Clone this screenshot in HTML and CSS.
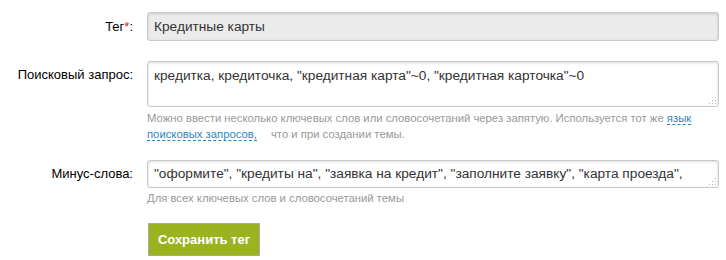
FILE: index.html
```html
<!DOCTYPE html>
<html lang="ru">
<head>
  <meta charset="UTF-8">
  <title>Тег</title>
  <link rel="stylesheet" href="styles.css">
</head>
<body>
  <form class="tag-form">
    <div class="row">
      <label class="label" for="tagName">Тег<span class="req">*</span>:</label>
      <div class="field">
        <input class="input input-readonly" id="tagName" type="text" value="Кредитные карты" readonly>
      </div>
    </div>

    <div class="row row-query">
      <label class="label" for="query">Поисковый запрос:</label>
      <div class="field">
        <div class="area-wrap">
          <textarea class="input area" id="query">кредитка, кредиточка, "кредитная карта"~0, "кредитная карточка"~0</textarea>
          <span class="grip"></span>
        </div>
        <div class="hint">Можно ввести несколько ключевых слов или словосочетаний через запятую. Используется тот же <a class="link" href="#">язык</a><br><a class="link" href="#">поисковых запросов,</a><span class="hint-tail">что и при создании темы.</span></div>
      </div>
    </div>

    <div class="row row-minus">
      <label class="label" for="minus">Минус-слова:</label>
      <div class="field">
        <div class="area-wrap">
          <textarea class="input area area-line" id="minus">"оформите", "кредиты на", "заявка на кредит", "заполните заявку", "карта проезда", "карта москвича", "транспортная карта"</textarea>
          <span class="grip"></span>
        </div>
        <div class="hint">Для всех ключевых слов и словосочетаний темы</div>
      </div>
    </div>

    <div class="row row-actions">
      <div class="label"></div>
      <div class="field">
        <button class="btn-save" type="button">Сохранить тег</button>
      </div>
    </div>
  </form>
</body>
</html>
```

FILE: styles.css
```css
body {
  margin: 0;
  padding: 12px 7px 0 8px;
  background: #fff;
  font-family: "Liberation Sans", Arial, sans-serif;
  font-size: 13px;
  color: #000;
}

.row {
  display: flex;
  align-items: flex-start;
  gap: 14px;
}

.label {
  width: 125px;
  flex-shrink: 0;
  text-align: right;
  line-height: 29px;
  font-size: 13px;
}

.req {
  color: #e02020;
}

.field {
  flex: 1;
}

.input {
  display: block;
  box-sizing: border-box;
  width: 100%;
  margin: 0;
  padding: 4px 6px;
  border: 1px solid #c9c9c9;
  border-radius: 3px;
  background: #fff;
  box-shadow: inset 0 1px 3px rgba(0, 0, 0, 0.15);
  font-family: "Liberation Sans", Arial, sans-serif;
  font-size: 13.7px;
  line-height: 19px;
  color: #333;
  outline: none;
}

.input-readonly {
  height: 29px;
  background: #ebebeb;
}

.row-query {
  margin-top: 20px;
}

.row-query .label {
  line-height: 27px;
}

.area-wrap {
  position: relative;
}

.area {
  height: 46px;
  resize: none;
  overflow: hidden;
  padding-top: 4px;
}

.area-line {
  height: 28px;
  padding-top: 3px;
  padding-right: 14px;
}

.grip {
  position: absolute;
  right: 3px;
  bottom: 3px;
  width: 8px;
  height: 8px;
  background-image: radial-gradient(circle, #b5b5b5 0.7px, transparent 1px);
  background-size: 3px 3px;
  clip-path: polygon(100% 0, 100% 100%, 0 100%);
}

.hint {
  margin-top: 3px;
  font-size: 11.3px;
  line-height: 16px;
  color: #999;
}

.link {
  color: #1f8ac2;
  text-decoration: none;
  border-bottom: 1px dashed #1f8ac2;
}

.hint-tail {
  margin-left: 14px;
}

.row-minus {
  margin-top: 18px;
}

.row-minus .label {
  line-height: 28px;
}

.row-minus .hint {
  margin-top: 2px;
}

.row-actions {
  margin-top: 17px;
}

.btn-save {
  margin-left: 1px;
  width: 112px;
  height: 33px;
  padding: 0;
  border: 1px solid #a8a8a8;
  background: #9bb31f;
  color: #fff;
  font-family: "Liberation Sans", Arial, sans-serif;
  font-size: 13px;
  font-weight: bold;
  cursor: pointer;
}

.btn-save:hover {
  background: #8aa019;
}
```
